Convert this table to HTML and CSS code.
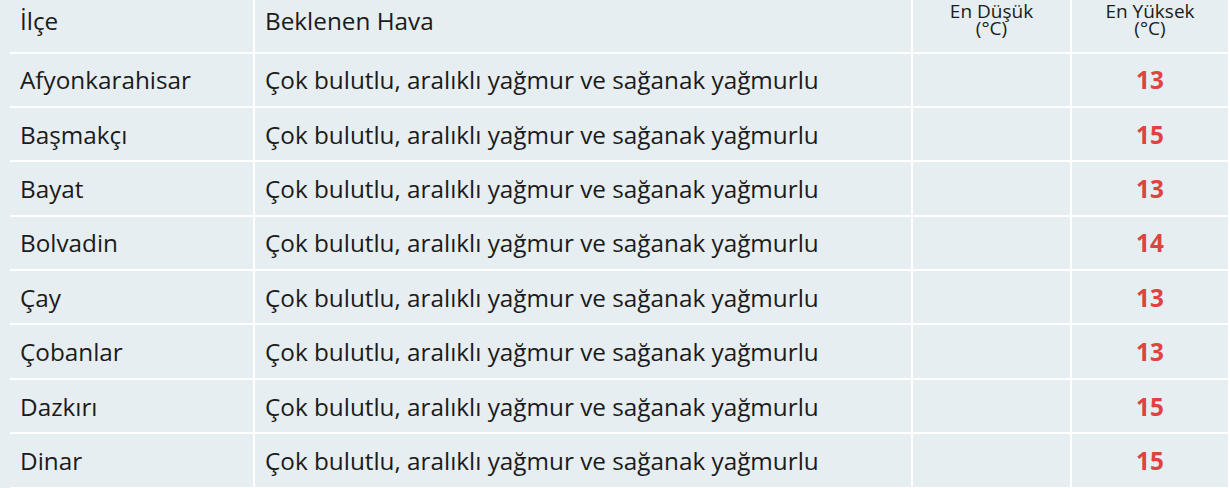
FILE: index.html
```html
<!DOCTYPE html>
<html lang="tr">
<head>
<meta charset="utf-8">
<link rel="stylesheet" href="styles.css">
</head>
<body>
<table class="forecast">
  <thead>
    <tr>
      <th class="c-district">İlçe</th>
      <th class="c-desc">Beklenen Hava</th>
      <th class="c-min small">En Düşük<br>(°C)</th>
      <th class="c-max small">En Yüksek<br>(°C)</th>
    </tr>
  </thead>
  <tbody>
    <tr><td class="c-district">Afyonkarahisar</td><td class="c-desc">Çok bulutlu, aralıklı yağmur ve sağanak yağmurlu</td><td class="c-min"></td><td class="c-max">13</td></tr>
    <tr><td class="c-district">Başmakçı</td><td class="c-desc">Çok bulutlu, aralıklı yağmur ve sağanak yağmurlu</td><td class="c-min"></td><td class="c-max">15</td></tr>
    <tr><td class="c-district">Bayat</td><td class="c-desc">Çok bulutlu, aralıklı yağmur ve sağanak yağmurlu</td><td class="c-min"></td><td class="c-max">13</td></tr>
    <tr><td class="c-district">Bolvadin</td><td class="c-desc">Çok bulutlu, aralıklı yağmur ve sağanak yağmurlu</td><td class="c-min"></td><td class="c-max">14</td></tr>
    <tr><td class="c-district">Çay</td><td class="c-desc">Çok bulutlu, aralıklı yağmur ve sağanak yağmurlu</td><td class="c-min"></td><td class="c-max">13</td></tr>
    <tr><td class="c-district">Çobanlar</td><td class="c-desc">Çok bulutlu, aralıklı yağmur ve sağanak yağmurlu</td><td class="c-min"></td><td class="c-max">13</td></tr>
    <tr><td class="c-district">Dazkırı</td><td class="c-desc">Çok bulutlu, aralıklı yağmur ve sağanak yağmurlu</td><td class="c-min"></td><td class="c-max">15</td></tr>
    <tr><td class="c-district">Dinar</td><td class="c-desc">Çok bulutlu, aralıklı yağmur ve sağanak yağmurlu</td><td class="c-min"></td><td class="c-max">15</td></tr>
  </tbody>
</table>
</body>
</html>
```
FILE: styles.css
```css
html, body {
  margin: 0;
  padding: 0;
  background: #e6eef1;
}
body {
  font-family: "Open Sans", "Liberation Sans", sans-serif;
  color: #1b1b1b;
  overflow: hidden;
}
.forecast {
  margin-left: 10px;
  width: 1220px;
  table-layout: fixed;
  border-collapse: separate;
  border-spacing: 0;
}
.forecast th,
.forecast td {
  box-sizing: border-box;
  border-bottom: 2px solid #ffffff;
  font-size: 24.3px;
  padding: 0 10px;
}
.forecast th {
  height: 53.5px;
  font-weight: 400;
  text-align: left;
  vertical-align: top;
  padding-top: 4px;
}
.forecast td {
  height: 54.4px;
  vertical-align: middle;
}
.c-district { width: 243px; }
.forecast .c-desc { width: 658px; border-left: 2px solid #fff; padding-left: 10px; }
.forecast .c-min { width: 159px; border-left: 2px solid #fff; text-align: center; }
.forecast .c-max { width: 160px; border-left: 2px solid #fff; border-right: 2px solid #fff; text-align: center; }
.forecast th.small {
  font-size: 19px;
  line-height: 17px;
  text-align: center;
  padding: 3px 0 0;
}
.forecast td.c-max {
  font-weight: 700;
  color: #e0433f;
}
```
